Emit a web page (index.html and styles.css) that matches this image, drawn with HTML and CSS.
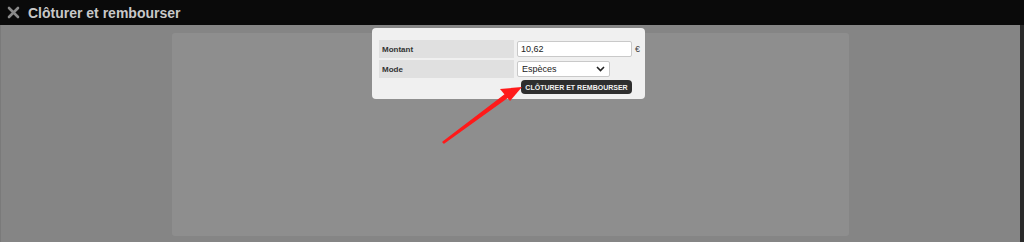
FILE: index.html
```html
<!DOCTYPE html>
<html lang="fr">
<head>
    <meta charset="UTF-8">
    <link rel="stylesheet" href="styles.css">
    <title>Clôturer et rembourser</title>
</head>
<body>
    <div class="topbar">
        <svg class="close" width="13" height="13" viewBox="0 0 13 13">
            <path d="M2 2 L11 11 M11 2 L2 11" stroke="#8a8a8a" stroke-width="2.6" stroke-linecap="round"/>
        </svg>
        <span class="title">Clôturer et rembourser</span>
    </div>
    <div class="overlay">
        <div class="panel"></div>
        <div class="side"></div>
    </div>

    <div class="dialog">
        <table class="form">
            <tr>
                <td class="label">Montant</td>
                <td class="field"><input type="text" value="10,62"></td>
                <td class="unit">€</td>
            </tr>
            <tr>
                <td class="label">Mode</td>
                <td class="field" colspan="2">
                    <div class="select">Espèces
                        <svg width="9" height="6" viewBox="0 0 9 6"><path d="M1 1 L4.5 4.5 L8 1" stroke="#222" stroke-width="1.6" fill="none"/></svg>
                    </div>
                </td>
            </tr>
        </table>
        <div class="actions">
            <button type="button">CLÔTURER ET REMBOURSER</button>
        </div>
    </div>

    <!-- annotation arrow -->
    <svg class="arrow" width="1024" height="242" viewBox="0 0 1024 242">
        <path d="M443 142 L444 143 L508 97 L506 94 Z" fill="#ff1a1a" stroke="#ff1a1a" stroke-width="1.5" stroke-linejoin="round"/>
        <path d="M522 87 L500 89 L510 101 Z" fill="#ff1a1a"/>
    </svg>
</body>
</html>
```

FILE: styles.css
```css
body {
    margin: 0;
    font-family: "Liberation Sans", Arial, sans-serif;
    background: #0a0a0a;
    height: 242px;
    overflow: hidden;
    position: relative;
}

.topbar {
    height: 25px;
    background: #0a0a0a;
    display: flex;
    align-items: center;
    padding-left: 7px;
    gap: 8px;
}

.title {
    font-weight: bold;
    font-size: 14px;
    color: #c8c8c8;
}

.overlay {
    height: 217px;
    display: flex;
    background: #858585;
    border-left: 1px solid #7a7a7a;
    padding: 8px 0 0 171px;
    box-sizing: border-box;
}

.panel {
    width: 677px;
    height: 203px;
    background: #8e8e8e;
    border-radius: 3px;
}

.side {
    margin-left: auto;
    width: 4px;
    height: 217px;
    margin-top: -8px;
    background: #2a2a2a;
}

.dialog {
    position: absolute;
    left: 372px;
    top: 28px;
    width: 273px;
    height: 71px;
    background: #f0f0f0;
    border-radius: 4px;
    box-sizing: border-box;
    padding: 12px 0 0 7px;
}

.form {
    border-collapse: separate;
    border-spacing: 0 2px;
    margin-top: -2px;
}

.form td {
    padding: 0;
    height: 18px;
}

.label {
    width: 132px;
    background: #e0e0e0;
    font-size: 8px;
    font-weight: bold;
    color: #333;
    padding-left: 3px !important;
}

.field {
    padding-left: 3px !important;
}

.field input {
    width: 115px;
    height: 16px;
    box-sizing: border-box;
    border: 1px solid #c9c9c9;
    border-radius: 2px;
    font-family: "Liberation Sans", Arial, sans-serif;
    font-size: 9px;
    padding: 0 3px;
    color: #222;
    margin: 0;
    display: block;
}

.unit {
    font-size: 9px;
    color: #444;
    padding-left: 3px !important;
}

.select {
    width: 93px;
    height: 16px;
    box-sizing: border-box;
    border: 1px solid #c9c9c9;
    border-radius: 2px;
    background: #fff;
    font-size: 9px;
    color: #222;
    display: flex;
    align-items: center;
    justify-content: space-between;
    padding: 0 4px;
}

.actions {
    display: flex;
    padding-left: 142px;
    margin-top: 0;
}

.actions button {
    background: #2e2e2e;
    color: #f2f2f2;
    border: none;
    border-radius: 4px;
    height: 14px;
    width: 111px;
    padding: 0;
    font-family: "Liberation Sans", Arial, sans-serif;
    font-size: 7px;
    font-weight: bold;
    white-space: nowrap;
}

.arrow {
    position: absolute;
    left: 0;
    top: 0;
    pointer-events: none;
}
```
